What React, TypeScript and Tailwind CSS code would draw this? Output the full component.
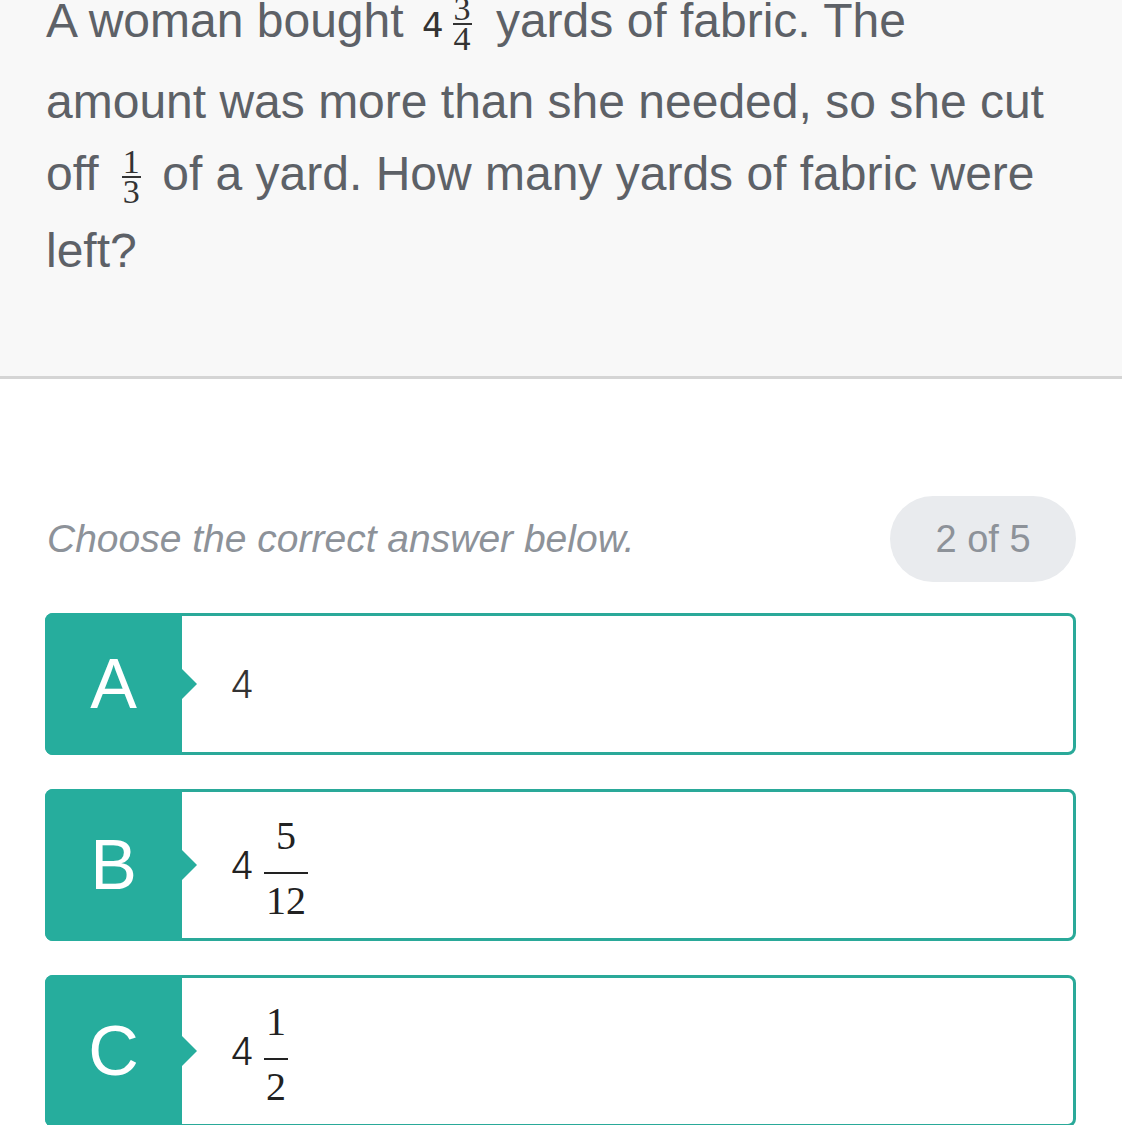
import React from "react";

const TEAL = "#26ad9d";

function InlineFrac({ n, d, className = "" }: { n: string; d: string; className?: string }) {
  return (
    <span
      className={`inline-flex flex-col items-center align-middle text-[34px] leading-[28px] font-['Liberation_Serif',serif] text-[#333] ${className}`}
    >
      <span className="px-[1px]">{n}</span>
      <span className="w-full border-t-[2px] border-[#333]" />
      <span className="px-[1px]">{d}</span>
    </span>
  );
}

function AnswerFrac({ whole, n, d }: { whole: string; n: string; d: string }) {
  return (
    <span className="flex items-center gap-[10px] text-[#222]">
      <span className="text-[38px] leading-none font-['Inter',sans-serif] font-light">{whole}</span>
      <span className="flex flex-col items-center translate-y-[3px] text-[40px] leading-[40px] font-['Liberation_Serif',serif]">
        <span className="px-[2px] mb-[16px]">{n}</span>
        <span className="w-full border-t-[2px] border-[#222]" />
        <span className="px-[2px] mt-[7px]">{d}</span>
      </span>
    </span>
  );
}

const OPTIONS = [
  {
    letter: "A",
    h: "h-[142px]",
    content: <span className="text-[38px] leading-none text-[#333] font-['Inter',sans-serif] font-light">4</span>,
  },
  { letter: "B", h: "h-[152px]", content: <AnswerFrac whole="4" n="5" d="12" /> },
  { letter: "C", h: "h-[152px]", content: <AnswerFrac whole="4" n="1" d="2" /> },
];

export default function App() {
  return (
    <div className="min-h-screen bg-white overflow-hidden font-['Liberation_Sans',Arial,sans-serif]">
      {/* Question */}
      <div className="bg-[#f8f8f8] border-b-[3px] border-[#d5d5d5] pl-[46px] pr-[40px] pb-[87px] text-[48px] leading-[77px] text-[#5d6167] whitespace-nowrap">
        <div className="h-[77px] -mt-[18px]">
          A woman bought{" "}
          <span className="ml-[5px] text-[34px] font-['DejaVu_Sans',sans-serif] text-[#333]">4</span>
          <InlineFrac n="3" d="4" className="ml-[9px] mr-[11px]" /> yards of fabric. The
        </div>
        <div className="h-[77px] mt-[4px]">amount was more than she needed, so she cut</div>
        <div className="h-[77px] -mt-[5px]">
          off <InlineFrac n="1" d="3" className="ml-[10px] mr-[8px]" /> of a yard. How many yards of fabric were
        </div>
        <div className="h-[77px]">left?</div>
      </div>

      {/* Prompt row */}
      <div className="mt-[117px] flex items-center justify-between pl-[47px] pr-[46px]">
        <p className="italic text-[39px] text-[#8d9299]">Choose the correct answer below.</p>
        <div className="h-[86px] w-[186px] rounded-full bg-[#e9ebee] flex items-center justify-center text-[38px] text-[#8d9299]">
          2 of 5
        </div>
      </div>

      {/* Options */}
      <div className="mt-[31px] pl-[45px] pr-[46px] flex flex-col gap-[34px]">
        {OPTIONS.map((opt) => (
          <div
            key={opt.letter}
            className={`flex ${opt.h} rounded-[8px] border-[3px] border-[#2aa999] bg-white`}
          >
            <div
              className="relative w-[137px] -ml-[3px] -my-[3px] rounded-l-[8px] flex items-center justify-center text-[70px] text-white"
              style={{ backgroundColor: TEAL }}
            >
              {opt.letter}
              <span className="absolute -right-[15px] top-1/2 -translate-y-1/2 w-0 h-0 border-y-[15px] border-y-transparent border-l-[15px] border-l-[#26ad9d]" />
            </div>
            <div className="flex items-center pl-[48px]">{opt.content}</div>
          </div>
        ))}
      </div>
    </div>
  );
}
